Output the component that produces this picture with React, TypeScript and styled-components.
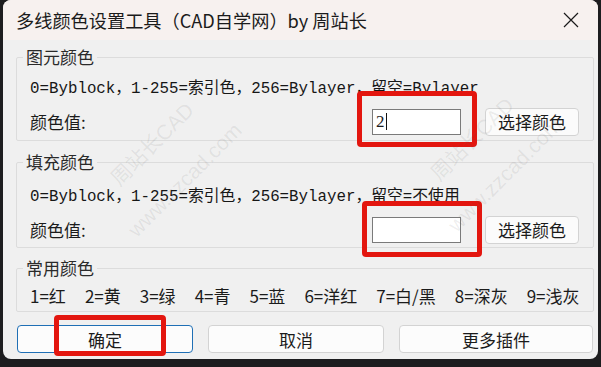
import styled, { createGlobalStyle } from "styled-components";

const GlobalStyle = createGlobalStyle`
  html, body {
    margin: 0;
    padding: 0;
    background: #1d1d1f;
    overflow: hidden;
  }
  body {
    font-family: "Noto Sans CJK SC", "Noto Sans", sans-serif;
  }
`;

const Window = styled.div`
  position: relative;
  width: 595px;
  height: 359px;
  margin-left: 3px;
  background: #f0f0f0;
  border-radius: 8px;
  overflow: hidden;
  display: flex;
  flex-direction: column;
  color: #1b1b1b;
`;

const TitleBar = styled.div`
  height: 40px;
  flex: none;
  display: flex;
  align-items: center;
  padding-left: 13px;
  background: #f7f1ef;
  font-size: 18.2px;
`;

const Title = styled.div`
  flex: 1;
  white-space: nowrap;
`;

const CloseBox = styled.div`
  width: 54px;
  height: 40px;
  display: flex;
  align-items: center;
  justify-content: center;
`;

const Body = styled.div`
  display: flex;
  flex-direction: column;
  padding: 7px 4px 0 13px;
`;

const Group = styled.fieldset<{ h: number; gapTop?: number }>`
  margin: ${({ gapTop }) => gapTop ?? 0}px 0 0 0;
  padding: 0;
  min-width: 0;
  height: ${({ h }) => h}px;
  box-sizing: border-box;
  border: 1px solid #dcdcdc;
  border-radius: 2px;
`;

const Legend = styled.legend`
  margin-left: 6px;
  padding: 0 3px;
  font-size: 17px;
  line-height: 20px;
  color: #2a2a2a;
`;

const Rows = styled.div<{ top: number }>`
  display: flex;
  flex-direction: column;
  padding: ${({ top }) => top}px 14px 0 13px;
`;

const Hint = styled.div`
  font-family: "Liberation Mono", "Noto Sans CJK SC", monospace;
  font-size: 15.8px;
  line-height: 20px;
  white-space: nowrap;
  color: #161616;
`;

const ValueRow = styled.div`
  display: flex;
  align-items: center;
  margin-top: 8px;
  height: 29px;
`;

const FieldLabel = styled.div`
  flex: 1;
  font-size: 17px;
`;

const FieldWrap = styled.div`
  position: relative;
`;

const TextBox = styled.div`
  width: 89px;
  height: 26px;
  box-sizing: border-box;
  border: 1px solid #7a7a7a;
  background: #fff;
  display: flex;
  align-items: center;
  padding-left: 3px;
  font-family: "Liberation Serif", serif;
  font-size: 17px;
`;

const Caret = styled.span`
  display: inline-block;
  width: 1px;
  height: 17px;
  margin-left: 1px;
  background: #111;
`;

const Marker = styled.span<{ l: number; t: number; r: number; b: number }>`
  position: absolute;
  left: ${({ l }) => l}px;
  top: ${({ t }) => t}px;
  right: ${({ r }) => r}px;
  bottom: ${({ b }) => b}px;
  border: 5px solid #e3160f;
  border-radius: 4px;
  pointer-events: none;
`;

const PickButton = styled.div`
  margin-left: 24px;
  width: 94px;
  height: 28px;
  box-sizing: border-box;
  border: 1px solid #d3d3d3;
  border-radius: 4px;
  background: #fbfbfb;
  display: flex;
  align-items: center;
  justify-content: center;
  font-size: 17px;
`;

const Palette = styled.div`
  display: flex;
  gap: 19px;
  padding: 7px 0 0 13px;
  font-size: 17px;
  line-height: 22px;
`;

const Footer = styled.div`
  display: flex;
  gap: 15px;
  margin-top: 13px;
  padding-left: 1px;
`;

const DialogButton = styled.div<{ w: number; primary?: boolean }>`
  position: relative;
  width: ${({ w }) => w}px;
  height: 28px;
  box-sizing: border-box;
  border: 1px solid ${({ primary }) => (primary ? "#1f6fb5" : "#d3d3d3")};
  border-radius: 4px;
  background: #fcfcfc;
  display: flex;
  align-items: center;
  justify-content: center;
  font-size: 17px;
`;

const Watermark = styled.div<{ x: number; y: number; size: number }>`
  position: absolute;
  left: ${({ x }) => x}px;
  top: ${({ y }) => y}px;
  transform: translate(-50%, -50%) rotate(-45deg);
  font-family: "Liberation Sans", "Noto Sans CJK SC", sans-serif;
  font-size: ${({ size }) => size}px;
  color: rgba(90, 90, 90, 0.1);
  white-space: nowrap;
  pointer-events: none;
`;

const palette = ["1=红", "2=黄", "3=绿", "4=青", "5=蓝", "6=洋红", "7=白/黑", "8=深灰", "9=浅灰"];

function App() {
  return (
    <>
      <GlobalStyle />
      <Window>
        <TitleBar>
          <Title>多线颜色设置工具（CAD自学网）by 周站长</Title>
          <CloseBox>
            <svg width="18" height="18" viewBox="0 0 18 18">
              <path d="M2 2 L16 16 M16 2 L2 16" stroke="#1a1a1a" strokeWidth="1.2" />
            </svg>
          </CloseBox>
        </TitleBar>
        <Body>
          <Group h={94}>
            <Legend>图元颜色</Legend>
            <Rows top={12}>
              <Hint>0=Byblock，1-255=索引色，256=Bylayer，留空=Bylayer</Hint>
              <ValueRow>
                <FieldLabel>颜色值:</FieldLabel>
                <FieldWrap>
                  <TextBox>
                    2<Caret />
                  </TextBox>
                  <Marker l={-15} t={-18} r={-16} b={-12} />
                </FieldWrap>
                <PickButton>选择颜色</PickButton>
              </ValueRow>
            </Rows>
          </Group>
          <Group h={96} gapTop={11}>
            <Legend>填充颜色</Legend>
            <Rows top={15}>
              <Hint>0=Byblock，1-255=索引色，256=Bylayer，留空=不使用</Hint>
              <ValueRow>
                <FieldLabel>颜色值:</FieldLabel>
                <FieldWrap>
                  <TextBox />
                  <Marker l={-10} t={-16} r={-21} b={-14} />
                </FieldWrap>
                <PickButton>选择颜色</PickButton>
              </ValueRow>
            </Rows>
          </Group>
          <Group h={54} gapTop={10}>
            <Legend>常用颜色</Legend>
            <Palette>
              {palette.map((p) => (
                <span key={p}>{p}</span>
              ))}
            </Palette>
          </Group>
          <Footer>
            <DialogButton w={176} primary>
              确定
              <Marker l={36} t={-11} r={26} b={-4} />
            </DialogButton>
            <DialogButton w={176}>取消</DialogButton>
            <DialogButton w={194}>更多插件</DialogButton>
          </Footer>
        </Body>
        <Watermark x={148} y={143} size={21}>周站长CAD</Watermark>
        <Watermark x={182} y={180} size={21}>www.zzcad.com</Watermark>
        <Watermark x={468} y={138} size={21}>周站长CAD</Watermark>
        <Watermark x={502} y={175} size={21}>www.zzcad.com</Watermark>
      </Window>
    </>
  );
}

export default App;
